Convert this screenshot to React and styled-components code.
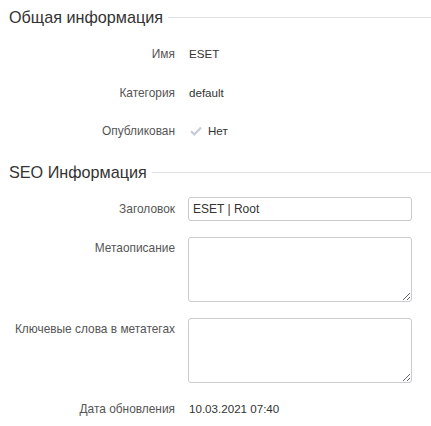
import React from 'react';
import styled, { createGlobalStyle } from 'styled-components';

const GlobalStyle = createGlobalStyle`
  body {
    margin: 0;
    background: #ffffff;
    font-family: "Liberation Sans", Arial, sans-serif;
  }
`;

const Page = styled.div`
  width: 431px;
  box-sizing: border-box;
  padding: 6px 19px 0 9px;
  display: flex;
  flex-direction: column;
`;

const SectionHeading = styled.div`
  display: flex;
  align-items: center;
  gap: 5px;
  height: 22px;
  margin-top: ${p => p.$top || 0}px;
  margin-right: -19px;
  font-size: 16.2px;
  color: #333333;
  &::after {
    content: '';
    flex: 1;
    height: 1px;
    margin-top: 1px;
    background: #dde1e7;
  }
`;

const Row = styled.div`
  display: grid;
  grid-template-columns: 166px 1fr;
  column-gap: 13px;
  align-items: ${p => (p.$top ? 'start' : 'center')};
  margin-top: ${p => p.$gap || 0}px;
`;

const Label = styled.div`
  text-align: right;
  font-size: 11.9px;
  line-height: 16px;
  color: #555555;
  padding-top: ${p => (p.$top ? 3 : 0)}px;
`;

const Value = styled.div`
  display: flex;
  align-items: center;
  gap: 6px;
  font-size: 11.6px;
  line-height: 16px;
  color: #333333;
  padding-left: 1px;
`;

const Check = styled.svg`
  width: 12px;
  height: 10px;
  margin-left: 1px;
`;

const Input = styled.input`
  box-sizing: border-box;
  width: 100%;
  height: 24px;
  margin: 0;
  padding: 0 4px;
  border: 1px solid #c9cbd0;
  border-radius: 3px;
  font-family: "Liberation Sans", Arial, sans-serif;
  font-size: 12px;
  color: #333333;
  outline: none;
`;

const TextArea = styled.textarea`
  box-sizing: border-box;
  display: block;
  width: 100%;
  height: 65px;
  margin: 0;
  padding: 4px 5px;
  border: 1px solid #c9cbd0;
  border-radius: 3px;
  font-family: "Liberation Sans", Arial, sans-serif;
  font-size: 12px;
  color: #333333;
  outline: none;
`;

export default function App() {
  return (
    <>
      <GlobalStyle />
      <Page>
        <SectionHeading>Общая информация</SectionHeading>
        <Row $gap={18}>
          <Label>Имя</Label>
          <Value>ESET</Value>
        </Row>
        <Row $gap={23}>
          <Label>Категория</Label>
          <Value>default</Value>
        </Row>
        <Row $gap={22}>
          <Label>Опубликован</Label>
          <Value>
            <Check viewBox="0 0 12 10">
              <path d="M1 5.2 L4.4 8.4 L11 1.6" fill="none" stroke="#c5ccd6" strokeWidth="2.2" />
            </Check>
            Нет
          </Value>
        </Row>

        <SectionHeading $top={22}>SEO Информация</SectionHeading>
        <Row $gap={14}>
          <Label>Заголовок</Label>
          <Input defaultValue="ESET | Root" />
        </Row>
        <Row $gap={16} $top>
          <Label $top>Метаописание</Label>
          <TextArea />
        </Row>
        <Row $gap={16} $top>
          <Label $top>Ключевые слова в метатегах</Label>
          <TextArea />
        </Row>
        <Row $gap={18}>
          <Label>Дата обновления</Label>
          <Value>10.03.2021 07:40</Value>
        </Row>
      </Page>
    </>
  );
}
